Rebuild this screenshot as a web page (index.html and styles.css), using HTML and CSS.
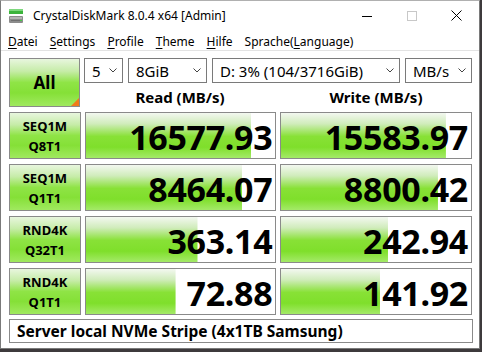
FILE: index.html
```html
<!DOCTYPE html>
<html lang="de">
<head>
    <meta charset="UTF-8">
    <title>CrystalDiskMark 8.0.4 x64 [Admin]</title>
    <link rel="stylesheet" href="styles.css">
</head>
<body>
    <div class="window">
        <div class="titlebar">
            <svg class="app-icon" width="16" height="16" viewBox="0 0 16 16">
                <rect x="1" y="1" width="14" height="5" fill="#3cb43c"/>
                <rect x="1" y="1" width="14" height="2" fill="#7ed87e"/>
                <rect x="1" y="8" width="14" height="7" rx="1" fill="#8c8c8c"/>
                <rect x="2" y="9" width="12" height="2" fill="#b4b4b4"/>
                <rect x="3" y="12" width="9" height="1" fill="#6e6e6e"/>
                <rect x="12" y="12" width="2" height="1" fill="#46c846"/>
            </svg>
            <span class="title">CrystalDiskMark 8.0.4 x64 [Admin]</span>
            <div class="controls">
                <span class="ctl">
                    <svg width="10" height="10" viewBox="0 0 10 10"><path d="M0 5.5H10" stroke="#000" stroke-width="1"/></svg>
                </span>
                <span class="ctl">
                    <svg width="10" height="10" viewBox="0 0 10 10"><rect x="0.5" y="0.5" width="9" height="9" fill="none" stroke="#c8c8c8"/></svg>
                </span>
                <span class="ctl">
                    <svg width="11" height="11" viewBox="0 0 11 11"><path d="M0.5 0.5L10.5 10.5M10.5 0.5L0.5 10.5" stroke="#000" stroke-width="1"/></svg>
                </span>
            </div>
        </div>

        <div class="menubar">
            <span class="menu"><u>D</u>atei</span>
            <span class="menu"><u>S</u>ettings</span>
            <span class="menu"><u>P</u>rofile</span>
            <span class="menu"><u>T</u>heme</span>
            <span class="menu"><u>H</u>ilfe</span>
            <span class="menu">Sprache(<u>L</u>anguage)</span>
        </div>

        <div class="main">
            <div class="top">
                <div class="btn btn-all">All</div>
                <div class="top-right">
                    <div class="selects">
                        <div class="select sel-count">5<svg class="chev" width="8" height="5" viewBox="0 0 8 5"><path d="M0.5 0.5L4 4L7.5 0.5" fill="none" stroke="#444"/></svg></div>
                        <div class="select sel-size">8GiB<svg class="chev" width="8" height="5" viewBox="0 0 8 5"><path d="M0.5 0.5L4 4L7.5 0.5" fill="none" stroke="#444"/></svg></div>
                        <div class="select sel-drive">D: 3% (104/3716GiB)<svg class="chev" width="8" height="5" viewBox="0 0 8 5"><path d="M0.5 0.5L4 4L7.5 0.5" fill="none" stroke="#444"/></svg></div>
                        <div class="select sel-unit">MB/s<svg class="chev" width="8" height="5" viewBox="0 0 8 5"><path d="M0.5 0.5L4 4L7.5 0.5" fill="none" stroke="#444"/></svg></div>
                    </div>
                    <div class="heads">
                        <div class="head">Read (MB/s)</div>
                        <div class="head">Write (MB/s)</div>
                    </div>
                </div>
            </div>

            <div class="row">
                <div class="btn btn-test">SEQ1M<br>Q8T1</div>
                <div class="cell" style="background-size: 87.4% 100%">16577.93</div>
                <div class="cell" style="background-size: 86.8% 100%">15583.97</div>
            </div>
            <div class="row">
                <div class="btn btn-test">SEQ1M<br>Q1T1</div>
                <div class="cell" style="background-size: 82.6% 100%">8464.07</div>
                <div class="cell" style="background-size: 82.6% 100%">8800.42</div>
            </div>
            <div class="row">
                <div class="btn btn-test">RND4K<br>Q32T1</div>
                <div class="cell" style="background-size: 59% 100%">363.14</div>
                <div class="cell" style="background-size: 56.3% 100%">242.94</div>
            </div>
            <div class="row">
                <div class="btn btn-test">RND4K<br>Q1T1</div>
                <div class="cell" style="background-size: 47.4% 100%">72.88</div>
                <div class="cell" style="background-size: 52.1% 100%">141.92</div>
            </div>

            <div class="comment">Server local NVMe Stripe (4x1TB Samsung)</div>
        </div>
    </div>
</body>
</html>
```

FILE: styles.css
```css
* {
    box-sizing: border-box;
}

body {
    margin: 0;
    background-color: #3e3a3c;
    font-family: "Noto Sans", "Open Sans", sans-serif;
    color: #000;
}

.window {
    width: 480px;
    height: 349px;
    background-color: #fff;
    border: 1px solid #7a7a7a;
    border-top-color: #b0b0b0;
    display: flex;
    flex-direction: column;
}

/* title bar */
.titlebar {
    height: 29px;
    display: flex;
    align-items: center;
    padding-left: 7px;
}

.app-icon {
    flex: none;
}

.title {
    margin-left: 9px;
    font-size: 12px;
    white-space: nowrap;
}

.controls {
    margin-left: auto;
    display: flex;
    align-self: stretch;
}

.ctl {
    width: 45px;
    display: flex;
    align-items: center;
    justify-content: center;
}

.ctl svg {
    display: block;
}

/* menu */
.menubar {
    height: 21px;
    display: flex;
    align-items: center;
    padding-top: 2px;
    padding-left: 1px;
    border-bottom: 1px solid #e3e3e3;
    font-size: 12px;
}

.menu {
    padding: 0 6px;
    white-space: nowrap;
}

.menu u {
    text-decoration-thickness: 1px;
    text-underline-offset: 2px;
}

/* main area */
.main {
    padding: 7px 7px 0 8px;
    display: flex;
    flex-direction: column;
}

.top {
    display: flex;
    gap: 4px;
}

.btn {
    border: 1px solid #8a8a8a;
    background: linear-gradient(#e8f6de 0%, #c6eca8 26%, #8fe446 50%, #85e037 72%, #a0e95f 100%);
    font-weight: bold;
    display: flex;
    align-items: center;
    justify-content: center;
    text-align: center;
}

.btn-all {
    position: relative;
    width: 72px;
    height: 49px;
    font-size: 17px;
}

.btn-all::after {
    content: "";
    position: absolute;
    right: 0;
    bottom: 0;
    border-style: solid;
    border-width: 0 0 8px 8px;
    border-color: transparent transparent #f07a1a transparent;
}

.top-right {
    width: 388px;
    display: flex;
    flex-direction: column;
}

.selects {
    display: flex;
    gap: 5px;
    height: 25px;
}

.select {
    border: 1px solid #7a7a7a;
    background-color: #fff;
    font-size: 15px;
    display: flex;
    align-items: center;
    padding-left: 7px;
    white-space: nowrap;
}

.chev {
    margin-left: auto;
    margin-right: 5px;
    flex: none;
}

.sel-count {
    width: 39px;
}

.sel-size {
    width: 79px;
}

.sel-drive {
    flex: 1;
}

.sel-unit {
    width: 67px;
}

.heads {
    display: grid;
    grid-template-columns: 192px 192px;
    column-gap: 4px;
    height: 24px;
}

.head {
    font-size: 15px;
    font-weight: bold;
    text-align: center;
    padding-top: 4px;
}

/* result rows */
.row {
    display: flex;
    gap: 4px;
    height: 47px;
    margin-top: 5px;
}

.btn-test {
    width: 72px;
    font-size: 13px;
    line-height: 20px;
}

.cell {
    width: 192px;
    border: 1px solid #8a8a8a;
    background-color: #fff;
    background-image: linear-gradient(#f3f8f0 0%, #d0ecbb 24%, #88e136 52%, #7fdf2b 76%, #a4ea68 100%);
    background-repeat: no-repeat;
    font-size: 34px;
    font-weight: bold;
    display: flex;
    align-items: center;
    justify-content: flex-end;
    padding: 2px 3px 0 0;
    letter-spacing: -0.3px;
}

.comment {
    margin-top: 4px;
    width: 464px;
    height: 24px;
    border: 1px solid #8a8a8a;
    font-size: 15.5px;
    font-weight: bold;
    display: flex;
    align-items: center;
    padding-left: 7px;
    white-space: nowrap;
}
```
